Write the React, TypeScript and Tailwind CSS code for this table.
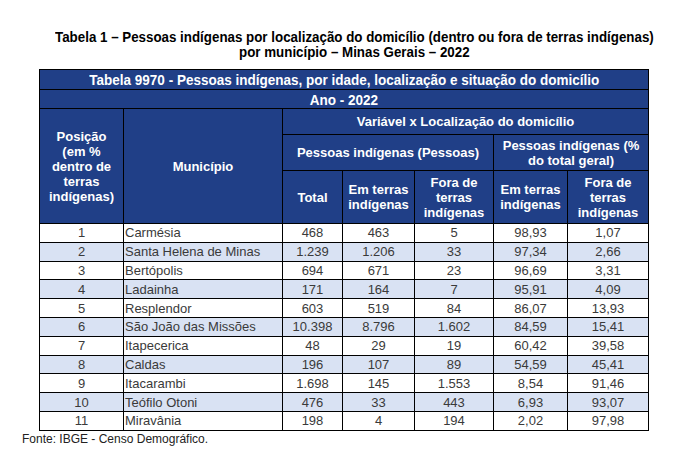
import React from 'react';

type Row = [string, string, string, string, string, string, string];

const rows: Row[] = [
  ['1', 'Carmésia', '468', '463', '5', '98,93', '1,07'],
  ['2', 'Santa Helena de Minas', '1.239', '1.206', '33', '97,34', '2,66'],
  ['3', 'Bertópolis', '694', '671', '23', '96,69', '3,31'],
  ['4', 'Ladainha', '171', '164', '7', '95,91', '4,09'],
  ['5', 'Resplendor', '603', '519', '84', '86,07', '13,93'],
  ['6', 'São João das Missões', '10.398', '8.796', '1.602', '84,59', '15,41'],
  ['7', 'Itapecerica', '48', '29', '19', '60,42', '39,58'],
  ['8', 'Caldas', '196', '107', '89', '54,59', '45,41'],
  ['9', 'Itacarambi', '1.698', '145', '1.553', '8,54', '91,46'],
  ['10', 'Teófilo Otoni', '476', '33', '443', '6,93', '93,07'],
  ['11', 'Miravânia', '198', '4', '194', '2,02', '97,98'],
];

// no Arial Narrow here, so squeeze Liberation Sans a bit
const Narrow: React.FC<{ children: React.ReactNode; squeeze?: string }> = ({ children, squeeze = 'scale-x-[0.9]' }) => (
  <span className={`inline-block whitespace-nowrap origin-center ${squeeze}`}>{children}</span>
);

const th = 'border border-black bg-[#203f87] text-white font-bold text-[13px] leading-[15px] text-center align-middle px-0.5';

const App: React.FC = () => {
  return (
    <div className="w-[683px] h-[461px] bg-white font-['Liberation_Sans',Arial,sans-serif] text-[#3a3a3a] overflow-hidden">
      <div className="pt-[30px] pl-[26px] text-center font-bold text-[14.5px] leading-[15px] text-black">
        <p><Narrow squeeze="scale-x-[0.92]">Tabela 1 – Pessoas indígenas por localização do domicílio (dentro ou fora de terras indígenas)</Narrow></p>
        <p><Narrow squeeze="scale-x-[0.92]">por município – Minas Gerais – 2022</Narrow></p>
      </div>
      <table className="ml-[39px] mt-[9px] w-[609px] border-collapse border border-black table-fixed">
        <colgroup>
          <col className="w-[84px]" />
          <col className="w-[159px]" />
          <col className="w-[60px]" />
          <col className="w-[72px]" />
          <col className="w-[79px]" />
          <col className="w-[74px]" />
          <col className="w-[81px]" />
        </colgroup>
        <thead>
          <tr className="h-[20px]">
            <th colSpan={7} className={`${th} text-[15px] overflow-hidden`}>
              <Narrow>Tabela 9970 - Pessoas indígenas, por idade, localização e situação do domicílio</Narrow>
            </th>
          </tr>
          <tr className="h-[19px]">
            <th colSpan={7} className={`${th} text-[15px]`}><Narrow>Ano - 2022</Narrow></th>
          </tr>
          <tr className="h-[26px]">
            <th rowSpan={3} className={th}>
              Posição<br />(em %<br />dentro de<br />terras<br />indígenas)
            </th>
            <th rowSpan={3} className={th}>Município</th>
            <th colSpan={5} className={`${th} text-[13.5px]`}>Variável x Localização do domicílio</th>
          </tr>
          <tr className="h-[36px]">
            <th colSpan={3} className={`${th} text-[13.5px]`}>Pessoas indígenas (Pessoas)</th>
            <th colSpan={2} className={`${th} text-[13.5px]`}>
              Pessoas indígenas (%<br />do total geral)
            </th>
          </tr>
          <tr className="h-[53px]">
            <th className={th}>Total</th>
            <th className={th}>Em terras<br />indígenas</th>
            <th className={th}>Fora de<br />terras<br />indígenas</th>
            <th className={th}>Em terras<br />indígenas</th>
            <th className={th}>Fora de<br />terras<br />indígenas</th>
          </tr>
        </thead>
        <tbody>
          {rows.map((r, i) => (
            <tr key={r[0]} className={`h-[18.8px] ${i % 2 === 1 ? 'bg-[#d9e2f3]' : 'bg-white'}`}>
              {r.map((c, j) => (
                <td
                  key={j}
                  className={`border border-black text-[13px] leading-[15px] p-0 ${
                    j === 1 ? 'text-left pl-[1px]' : 'text-center'
                  }`}
                >
                  {c}
                </td>
              ))}
            </tr>
          ))}
        </tbody>
      </table>
      <p className="pl-[22px] pt-[1px] text-[12px] leading-[14px] text-[#222]">Fonte: IBGE - Censo Demográfico.</p>
    </div>
  );
};

export default App;
